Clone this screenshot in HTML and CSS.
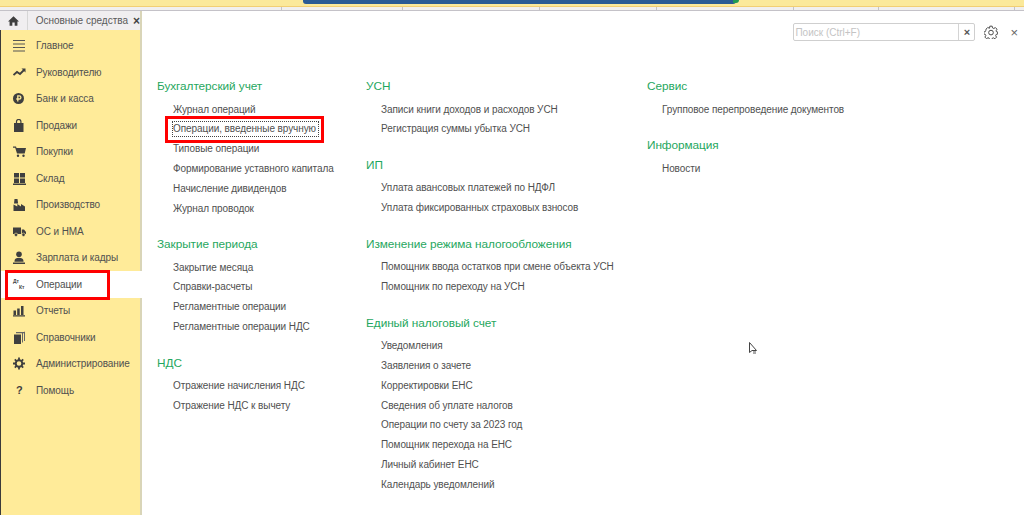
FILE: index.html
```html
<!DOCTYPE html>
<html lang="ru">
<head>
<meta charset="utf-8">
<title>Основные средства</title>
<link rel="stylesheet" href="styles.css">
</head>
<body>
<div class="topstrip">
  <div class="strip-yellow"><div class="bluebar"></div><div class="greenbit"></div></div>
  <div class="strip-tabs">
    <span class="seg s1"></span><span class="seg s2"></span><span class="seg s3"></span><span class="seg s4"></span><span class="seg s5"></span><span class="seg s6"></span><span class="seg s7"></span>
  </div>
</div>
<div class="main">
  <aside class="side">
    <div class="tabs">
      <div class="home"><svg width="11" height="10" viewBox="0 0 14 12"><path fill="#3f3f3f" d="M7 0 L14 6.500 H12 V12 H8.500 V8 H5.500 V12 H2 V6.500 H0 Z"/></svg></div>
      <div class="tab"><span>Основные средства</span><b class="tabx">×</b></div>
    </div>
    <nav class="nav">
      <a class="item"><svg class="ic" viewBox="0 0 14 13"><path fill="#555" d="M0 1h12v1H0zM0 4.500h12v1H0zM0 8h12v1H0zM0 11.500h12v1H0z"/></svg>Главное</a>
      <a class="item"><svg class="ic" viewBox="0 0 14 13"><path fill="none" stroke="#3f3f3f" stroke-width="1.800" d="M0.500 9 L4 6 L7 8 L11 4"/><path fill="#3f3f3f" d="M8.500 2.500H12.500V6.500Z"/></svg>Руководителю</a>
      <a class="item"><svg class="ic" viewBox="0 0 14 13"><circle cx="5.500" cy="6.500" r="5.500" fill="#3f3f3f"/><path fill="none" stroke="#ffeb99" stroke-width="1.300" d="M4.800 9.500V3.800h1.500a1.500 1.500 0 0 1 0 3.200H3.300"/></svg>Банк и касса</a>
      <a class="item"><svg class="ic" viewBox="0 0 14 13"><path fill="#3f3f3f" d="M1 4h9.500v9H1z"/><path fill="none" stroke="#3f3f3f" stroke-width="1.200" d="M3.500 5V2.600a2.200 2.200 0 0 1 4.400 0V5"/></svg>Продажи</a>
      <a class="item"><svg class="ic" viewBox="0 0 14 13"><path fill="#3f3f3f" d="M0 1.500h3l.5 1.500H13l-1.300 5.500H4L2.200 2.800H0z"/><circle cx="5" cy="10.800" r="1.200" fill="#3f3f3f"/><circle cx="10.500" cy="10.800" r="1.200" fill="#3f3f3f"/></svg>Покупки</a>
      <a class="item"><svg class="ic" viewBox="0 0 14 13"><path fill="#3f3f3f" d="M1 1h5v4.500H1zM7 1h5v4.500H7zM1 6.500h5V11H1zM7 6.500h5V11H7zM0 11.500h13V13H0z"/></svg>Склад</a>
      <a class="item"><svg class="ic" viewBox="0 0 14 13"><path fill="#3f3f3f" d="M.5 13V6.500l3.800 2V6l3.700 2.500V6l4 2.500V13zM1.500 1h3l.6 4.500H1z"/></svg>Производство</a>
      <a class="item"><svg class="ic" viewBox="0 0 14 13"><path fill="#3f3f3f" d="M0 2.500h8v6.500H0zM8.800 4.500H11l2 2.500V9H8.800z"/><circle cx="3" cy="9.800" r="1.700" fill="#3f3f3f" stroke="#ffeb99" stroke-width=".6"/><circle cx="10.500" cy="9.800" r="1.700" fill="#3f3f3f" stroke="#ffeb99" stroke-width=".6"/></svg>ОС и НМА</a>
      <a class="item"><svg class="ic" viewBox="0 0 14 13"><circle cx="6" cy="3.200" r="2.800" fill="#3f3f3f"/><path fill="#3f3f3f" d="M1.500 10c0-2.300 2-3.200 4.500-3.200s4.500.9 4.500 3.200v.8h-9zM0 11.500h12V13H0z"/></svg>Зарплата и кадры</a>
      <a class="item active"><span class="ic dtkt"><i>Дт</i><i>Кт</i></span>Операции</a>
      <a class="item"><svg class="ic" viewBox="0 0 14 13"><path fill="#3f3f3f" d="M.5 6.500h2.500V11H.5zM4.200 4.500h2.500V11H4.200zM8 2h2.500v9H8zM0 11.300h12V12.500H0z"/></svg>Отчеты</a>
      <a class="item"><svg class="ic" viewBox="0 0 14 13"><path fill="#3f3f3f" d="M1 3.500h7V13H1z"/><path fill="#666" d="M9 2h1v9.500H9zM11 .8h1V10h-1zM3 1h8v1.200H3z"/></svg>Справочники</a>
      <a class="item"><svg class="ic" viewBox="0 0 14 13"><circle cx="6" cy="6.500" r="3.300" fill="none" stroke="#3f3f3f" stroke-width="2"/><path stroke="#3f3f3f" stroke-width="1.800" d="M6 .5v2.500M6 10v2.500M0 6.500h2.500M9.500 6.500H12M1.800 2.300l1.800 1.800M8.400 8.900l1.800 1.800M10.200 2.300L8.400 4.100M3.600 8.900l-1.800 1.800"/></svg>Администрирование</a>
      <a class="item"><span class="ic qm">?</span>Помощь</a>
    </nav>
    <div class="hl hl-op"></div>
  </aside>
  <main class="content">
    <div class="toolbar">
      <div class="search"><span class="ph">Поиск (Ctrl+F)</span><span class="sx">×</span></div>
      <svg class="gear" width="14" height="14" viewBox="0 0 24 24"><path fill="none" stroke="#4a4a4a" stroke-width="1.700" d="M10 2h4l.6 3 2.200 1 2.700-1.600 2.800 2.800L20.700 10l.6 1.500 2.200.5v3.500l-2.600.6-.9 2.200 1.500 2.500-2.800 2.800-2.600-1.600-2 .8-.6 2.600h-4l-.6-2.800-2-.8-2.600 1.700-2.800-2.800 1.600-2.500-.9-2.200-2.700-.6V12l2.700-.6.900-2.200L3.700 6.900l2.800-2.800 2.500 1.600 .5-.2z"/><circle cx="12" cy="13" r="4" fill="none" stroke="#4a4a4a" stroke-width="1.700"/></svg>
      <span class="close">×</span>
    </div>
    <div class="cols">
      <div class="col c1">
        <section class="grp"><h3>Бухгалтерский учет</h3>
          <a>Журнал операций</a><a class="focus"><span>Операции, введенные вручную</span></a><a>Типовые операции</a><a>Формирование уставного капитала</a><a>Начисление дивидендов</a><a>Журнал проводок</a>
        </section>
        <section class="grp"><h3>Закрытие периода</h3>
          <a>Закрытие месяца</a><a>Справки-расчеты</a><a>Регламентные операции</a><a>Регламентные операции НДС</a>
        </section>
        <section class="grp"><h3>НДС</h3>
          <a>Отражение начисления НДС</a><a>Отражение НДС к вычету</a>
        </section>
      </div>
      <div class="col c2">
        <section class="grp"><h3>УСН</h3>
          <a>Записи книги доходов и расходов УСН</a><a>Регистрация суммы убытка УСН</a>
        </section>
        <section class="grp"><h3>ИП</h3>
          <a>Уплата авансовых платежей по НДФЛ</a><a>Уплата фиксированных страховых взносов</a>
        </section>
        <section class="grp"><h3>Изменение режима налогообложения</h3>
          <a>Помощник ввода остатков при смене объекта УСН</a><a>Помощник по переходу на УСН</a>
        </section>
        <section class="grp"><h3>Единый налоговый счет</h3>
          <a>Уведомления</a><a>Заявления о зачете</a><a>Корректировки ЕНС</a><a>Сведения об уплате налогов</a><a>Операции по счету за 2023 год</a><a>Помощник перехода на ЕНС</a><a>Личный кабинет ЕНС</a><a>Календарь уведомлений</a>
        </section>
      </div>
      <div class="col c3">
        <section class="grp"><h3>Сервис</h3>
          <a>Групповое перепроведение документов</a>
        </section>
        <section class="grp"><h3>Информация</h3>
          <a>Новости</a>
        </section>
      </div>
    </div>
    <svg class="cursor" width="9" height="13" viewBox="0 0 9 13"><path fill="#fff" stroke="#444" d="M.5.500V10.500L3 8.500H7.500Z"/><path fill="#aaa" d="M4 9h3v3H4z"/></svg>
  </main>
</div>
</body>
</html>
```
FILE: styles.css
```css
* { box-sizing: border-box; }
html, body { margin: 0; height: 100%; }
body { width: 1024px; height: 515px; overflow: hidden; background: #fff; font-family: "Liberation Sans", Arial, sans-serif; color: #505050; display: flex; flex-direction: column; }
.topstrip { height: 11px; flex: none; }
.strip-yellow { height: 7px; background: #fbe99a; border-bottom: 1px solid #f2cf73; position: relative; }
.bluebar { position: absolute; left: 303px; width: 433px; top: 0; height: 4px; background: #2a5b94; border-bottom-left-radius: 3px; border-bottom-right-radius: 3px; }
.greenbit { position: absolute; left: 733px; top: 0; width: 6px; height: 3px; background: #1f9a55; border-bottom-right-radius: 3px; }
.strip-tabs { height: 4px; display: flex; border-bottom: 1px solid #c4c2c8; background: #f1f0ee; }
.seg { border-right: 1px solid #c4c4c4; height: 3px; }
.s1 { width: 282px; } .s2 { width: 121px; } .s3 { width: 137px; } .s4 { width: 117px; } .s5 { width: 137px; } .s6 { width: 85px; } .s7 { width: 136px; }
.main { flex: 1; display: flex; min-height: 0; }
.side { width: 142px; flex: none; background: #ffeb99; border-right: 2px solid #d9d5b8; position: relative; display: flex; flex-direction: column; }
.tabs { height: 19px; display: flex; background: #f0eef0; font-size: 10px; }
.home { width: 28px; display: flex; align-items: center; justify-content: center; border-right: 1px solid #d6d6d6; }
.tab { flex: 1; display: flex; align-items: center; padding-left: 8px; color: #5a5a5a; white-space: nowrap; }
.tabx { margin-left: 5px; font-size: 12px; color: #444; }
.nav { display: flex; flex-direction: column; flex: 1; padding-top: 2.5px; border-left: 1px solid #3b3b3b; }
.item { height: 26.5px; flex: none; display: flex; align-items: center; font-size: 10px; color: #505050; padding-left: 12px; letter-spacing: -.1px; white-space: nowrap; }
.ic { width: 14px; height: 13px; margin-right: 9px; flex: none; }
.item.active { background: #fff; margin-right: -2px; }
.dtkt { display: flex; flex-direction: column; font-size: 5px; line-height: 6px; color: #444; font-weight: bold; }
.dtkt i { font-style: normal; }
.dtkt i + i { margin-left: 6px; }
.qm { font-weight: bold; font-size: 11px; line-height: 13px; padding-left: 3px; color: #3f3f3f; }
.hl-op { position: absolute; left: 5px; top: 259px; width: 105px; height: 30px; border: 3px solid #ff0000; }
.content { flex: 1; position: relative; min-width: 0; }
.toolbar { position: absolute; top: 12px; right: 0; display: flex; align-items: center; }
.search { width: 182px; height: 18px; display: flex; border: 1px solid #cfcfcf; border-radius: 2px; font-size: 10px; align-items: center; }
.ph { flex: 1; padding-left: 1px; color: #c4c4c4; }
.sx { width: 16px; text-align: center; border-left: 1px solid #d4d4d4; height: 16px; line-height: 16px; font-size: 11px; font-weight: bold; color: #555; }
.gear { margin-left: 9px; }
.close { margin: 0 6px 0 12px; font-size: 13px; color: #666; }
.cols { display: flex; padding: 68px 0 0 15px; }
.col { display: flex; flex-direction: column; }
.c1 { width: 209px; } .c2 { width: 281px; }
.grp { display: flex; flex-direction: column; align-items: flex-start; padding-bottom: 18.7px; }
.grp h3 { margin: 0 0 5.6px; font-weight: normal; font-size: 11.8px; line-height: 15px; color: #1fa75e; letter-spacing: -.06px; white-space: nowrap; }
.grp a { height: 19.8px; line-height: 19.8px; font-size: 10px; padding-left: 16px; color: #505050; letter-spacing: -.08px; white-space: nowrap; position: relative; }
.c2 a, .c3 a { padding-left: 15px; }
.focus span { display: inline-block; line-height: 14px; padding-right: 2px; outline: 1px dotted #444; }
.focus::after { content: ""; position: absolute; left: 8px; right: -6px; top: -3.5px; bottom: -3.5px; border: 3px solid #ff0000; }
.cursor { position: absolute; left: 607px; top: 331px; }
```
